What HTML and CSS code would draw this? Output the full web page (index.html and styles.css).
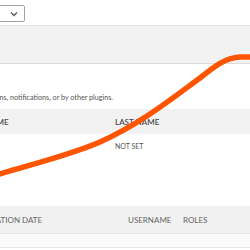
FILE: index.html
```html
<!DOCTYPE html>
<html lang="en">
<head>
    <meta charset="UTF-8">
    <title>Users</title>
    <link rel="stylesheet" href="styles.css">
</head>
<body>
    <div class="page">
        <!-- filter bar -->
        <div class="toolbar">
            <div class="select">
                <span>All users</span>
                <svg class="chev" width="8" height="6" viewBox="0 0 8 6"><path d="M1 1.5 L4 4.5 L7 1.5" fill="none" stroke="#555" stroke-width="1.3"/></svg>
            </div>
        </div>

        <div class="panel"></div>

        <p class="note"><span>Users are added by extensions, notifications, or by other plugins.</span></p>

        <div class="table one">
            <div class="row head">
                <div class="cell first">First name</div>
                <div class="cell">Last name</div>
            </div>
            <div class="row">
                <div class="cell first">John</div>
                <div class="cell">Not set</div>
            </div>
        </div>

        <div class="table two">
            <div class="row head">
                <div class="cell date">Registration date</div>
                <div class="cell user">Username</div>
                <div class="cell">Roles</div>
            </div>
            <div class="row empty"></div>
        </div>
    </div>

    <!-- hand drawn stroke over the page -->
    <svg class="scribble" width="250" height="250" viewBox="0 0 250 250">
        <path d="M-4,175 C40,162 70,155 100,142 C140,124 170,100 200,78 C215,66 225,58 240,57 L256,57" fill="none" stroke="#ff5500" stroke-width="5.5" stroke-linecap="round"/>
    </svg>
</body>
</html>
```

FILE: styles.css
```css
body {
    margin: 0;
    font-family: Lato, "Open Sans", sans-serif;
    background: #fff;
    overflow: hidden;
    position: relative;
    width: 250px;
    height: 250px;
}
.page {
    margin-left: -300px;
    width: 560px;
}
.toolbar {
    height: 25px;
    display: flex;
    padding: 5px 0 0 225px;
    box-sizing: border-box;
}
.select {
    width: 100px;
    height: 17px;
    border: 1px solid #a0a0a0;
    border-radius: 2px;
    box-sizing: border-box;
    display: flex;
    align-items: center;
    justify-content: space-between;
    padding: 0 6px;
    font-size: 8px;
    color: #444;
}
.panel {
    height: 37px;
    background: #f2f2f2;
    border-top: 1px solid #e2e2e2;
    border-bottom: 1px solid #dcdcdc;
}
.note {
    margin: 29px 0 0 0;
    display: flex;
    justify-content: flex-end;
    padding-right: 147px;
    font-size: 7.2px;
    color: #555;
    line-height: 10px;
    white-space: nowrap;
}
.row {
    display: flex;
    align-items: center;
    font-size: 8px;
    text-transform: uppercase;
    white-space: nowrap;
}
.one {
    margin-top: 6px;
}
.one .head {
    height: 25px;
    background: #f2f2f2;
    color: #4a4a4a;
    font-weight: 600;
}
.one .row:not(.head) {
    height: 24px;
    color: #555;
    font-size: 7px;
}
.one .first {
    width: 415px;
    padding-left: 262px;
    box-sizing: border-box;
}
.two {
    margin-top: 48px;
}
.two .head {
    height: 27px;
    background: #f1f1f1;
    color: #666;
    border-bottom: 1px solid #e6e6e6;
}
.two .date {
    width: 428px;
    padding-left: 264px;
    box-sizing: border-box;
}
.two .user {
    width: 55px;
}
.empty {
    height: 13px;
    background: #fafafa;
    border-bottom: 1px solid #e6e6e6;
}
.scribble {
    position: absolute;
    left: 0;
    top: 0;
    pointer-events: none;
}
```
